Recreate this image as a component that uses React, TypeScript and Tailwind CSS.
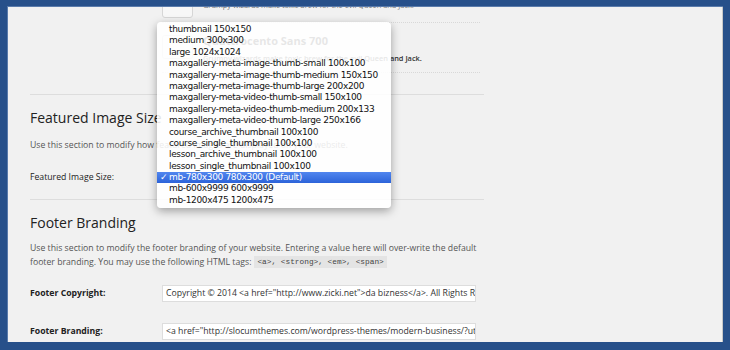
import React from "react";

const items = [
  "thumbnail 150x150",
  "medium 300x300",
  "large 1024x1024",
  "maxgallery-meta-image-thumb-small 100x100",
  "maxgallery-meta-image-thumb-medium 150x150",
  "maxgallery-meta-image-thumb-large 200x200",
  "maxgallery-meta-video-thumb-small 150x100",
  "maxgallery-meta-video-thumb-medium 200x133",
  "maxgallery-meta-video-thumb-large 250x166",
  "course_archive_thumbnail 100x100",
  "course_single_thumbnail 100x100",
  "lesson_archive_thumbnail 100x100",
  "lesson_single_thumbnail 100x100",
  "mb-780x300 780x300 (Default)",
  "mb-600x9999 600x9999",
  "mb-1200x475 1200x475",
];

export default function App() {
  return (
    <div
      className="w-[730px] h-[350px] bg-[#27508a] pt-[6px] pl-[7px] pr-[7px] pb-[8px]"
      style={{ fontFamily: '"Open Sans", sans-serif' }}
    >
      <div className="relative h-full w-full bg-[#f1f1f1] overflow-hidden border-t border-l border-[#5a7bab] shadow-[inset_-1px_0_0_#c8c8c8]">
        <div className="pl-[22px] -mt-[10px]">
          {/* font preview rows */}
          <div className="ml-[132px] w-[318px]">
            <div className="flex items-start gap-[10px] h-[26px] border-b border-dotted border-[#d8d8d8]">
              <div className="w-[31px] h-[21px] rounded-[3px] border border-[#d6d6d6] bg-[#f7f7f7] shrink-0" />
              <div className="pt-[2px] text-[7.4px] leading-[12px] text-[#777]">
                Grumpy wizards make toxic brew for the evil Queen and Jack.
              </div>
            </div>
            <div className="flex items-start gap-[10px] h-[50px] border-b border-dotted border-[#d8d8d8]">
              <div className="mt-[12px] w-[31px] h-[24px] rounded-[3px] border border-[#d6d6d6] bg-[#f7f7f7] shrink-0" />
              <div className="pt-[10px]">
                <div className="text-[11px] leading-[16px] font-bold text-[#333]">Quattrocento Sans 700</div>
                <div className="text-[7.4px] leading-[14px] font-semibold text-[#333] mt-[2px]">
                  Grumpy wizards make toxic brew for the evil Queen and Jack.
                </div>
              </div>
            </div>
          </div>
          <div className="w-[454px] border-b border-[#dddddd] mt-[21px]" />

          {/* Featured Image Size */}
          <div className="mt-[13px] text-[14px] leading-[20px] text-[#222]">Featured Image Size</div>
          <div className="mt-[10px] text-[8.7px] leading-[14px] text-[#555]">
            Use this section to modify how featured images are displayed on your website.
          </div>
          <div className="mt-[19px] flex items-center h-[14px] text-[8.7px] text-[#222]">
            <div className="w-[132px]">Featured Image Size:</div>
          </div>
          <div className="w-[454px] border-b border-[#dddddd] mt-[14px]" />

          {/* Footer Branding */}
          <div className="mt-[13px] text-[14px] leading-[20px] text-[#222]">Footer Branding</div>
          <div className="mt-[8px] text-[8.7px] leading-[14px] text-[#555]">
            <div className="whitespace-nowrap">
              Use this section to modify the footer branding of your website. Entering a value here will over-write the default
            </div>
            <div className="whitespace-nowrap flex items-center h-[14px]">
              <span>footer branding. You may use the following HTML tags:</span>
              <span
                className="ml-[3px] bg-[#e4e4e4] px-[3px] h-[12px] leading-[12px] text-[7.8px] text-[#444]"
                style={{ fontFamily: '"Liberation Mono", monospace' }}
              >
                {"<a>, <strong>, <em>, <span>"}
              </span>
            </div>
          </div>
          <div className="mt-[16px] flex items-center h-[17px]">
            <div className="w-[132px] text-[8.7px] font-bold text-[#222]">Footer Copyright:</div>
            <div className="w-[314px] h-[17px] bg-white border border-[#dddddd] px-[3px] text-[8.7px] leading-[15px] text-[#333] overflow-hidden whitespace-nowrap">
              Copyright © 2014 &lt;a href="http://www.zicki.net"&gt;da bizness&lt;/a&gt;. All Rights Reserved.
            </div>
          </div>
          <div className="mt-[21px] flex items-center h-[17px]">
            <div className="w-[132px] text-[8.7px] font-bold text-[#222]">Footer Branding:</div>
            <div className="w-[314px] h-[17px] bg-white border border-[#dddddd] px-[3px] text-[8.7px] leading-[15px] text-[#333] overflow-hidden whitespace-nowrap">
              &lt;a href="http://slocumthemes.com/wordpress-themes/modern-business/?utm_source=footer"&gt;
            </div>
          </div>
        </div>

        {/* open select menu */}
        <div
          className="absolute left-[149px] top-[15px] w-[234px] rounded-[4px] bg-white/[0.88] py-[2px] shadow-[0_3px_10px_rgba(0,0,0,0.35)]"
          style={{ fontFamily: '"DejaVu Sans", sans-serif' }}
        >
          {items.map((it, i) => {
            const sel = i === 13;
            return (
              <div
                key={i}
                className={
                  sel
                    ? "relative h-[11.4px] leading-[11.4px] pl-[12px] text-[9px] tracking-[-0.35px] text-white bg-gradient-to-b from-[#5186ef] to-[#2c63d9]"
                    : "relative h-[11.4px] leading-[11.4px] pl-[12px] text-[9px] tracking-[-0.35px] text-[#111]"
                }
              >
                {sel && <span className="absolute left-[3px] top-0">✓</span>}
                {it}
              </div>
            );
          })}
        </div>
      </div>
    </div>
  );
}
